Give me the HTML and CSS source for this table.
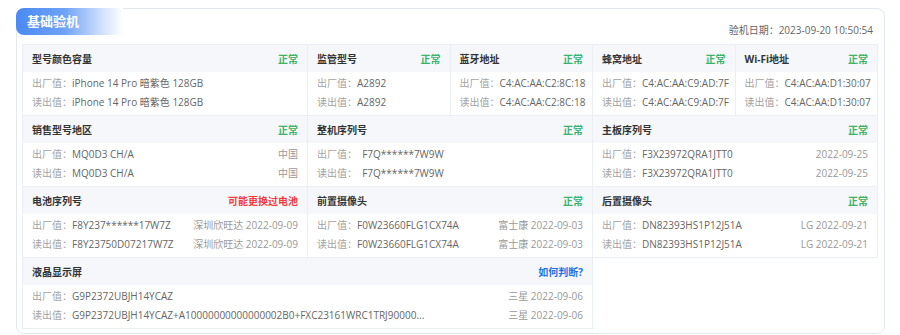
FILE: index.html
```html
<!DOCTYPE html>
<html lang="zh-CN">
<head>
<meta charset="utf-8">
<title>基础验机</title>
<link rel="stylesheet" href="styles.css">
</head>
<body>
<div class="card">
  <div class="card-head">
    <div class="badge">基础验机</div>
    <div class="date">验机日期：2023-09-20 10:50:54</div>
  </div>
  <div class="grid">
    <div class="cell span2">
      <div class="cell-head"><span class="title">型号颜色容量</span><span class="ok">正常</span></div>
      <div class="cell-body">
        <div class="line"><span><span class="lbl">出厂值：</span><span class="val">iPhone 14 Pro 暗紫色 128GB</span></span></div>
        <div class="line"><span><span class="lbl">读出值：</span><span class="val">iPhone 14 Pro 暗紫色 128GB</span></span></div>
      </div>
    </div>
    <div class="cell">
      <div class="cell-head"><span class="title">监管型号</span><span class="ok">正常</span></div>
      <div class="cell-body">
        <div class="line"><span><span class="lbl">出厂值：</span><span class="val">A2892</span></span></div>
        <div class="line"><span><span class="lbl">读出值：</span><span class="val">A2892</span></span></div>
      </div>
    </div>
    <div class="cell">
      <div class="cell-head"><span class="title">蓝牙地址</span><span class="ok">正常</span></div>
      <div class="cell-body">
        <div class="line"><span><span class="lbl">出厂值：</span><span class="val">C4:AC:AA:C2:8C:18</span></span></div>
        <div class="line"><span><span class="lbl">读出值：</span><span class="val">C4:AC:AA:C2:8C:18</span></span></div>
      </div>
    </div>
    <div class="cell">
      <div class="cell-head"><span class="title">蜂窝地址</span><span class="ok">正常</span></div>
      <div class="cell-body">
        <div class="line"><span><span class="lbl">出厂值：</span><span class="val">C4:AC:AA:C9:AD:7F</span></span></div>
        <div class="line"><span><span class="lbl">读出值：</span><span class="val">C4:AC:AA:C9:AD:7F</span></span></div>
      </div>
    </div>
    <div class="cell">
      <div class="cell-head"><span class="title">Wi-Fi地址</span><span class="ok">正常</span></div>
      <div class="cell-body">
        <div class="line"><span><span class="lbl">出厂值：</span><span class="val">C4:AC:AA:D1:30:07</span></span></div>
        <div class="line"><span><span class="lbl">读出值：</span><span class="val">C4:AC:AA:D1:30:07</span></span></div>
      </div>
    </div>

    <div class="cell span2">
      <div class="cell-head"><span class="title">销售型号地区</span><span class="ok">正常</span></div>
      <div class="cell-body">
        <div class="line"><span><span class="lbl">出厂值：</span><span class="val">MQ0D3 CH/A</span></span><span class="meta">中国</span></div>
        <div class="line"><span><span class="lbl">读出值：</span><span class="val">MQ0D3 CH/A</span></span><span class="meta">中国</span></div>
      </div>
    </div>
    <div class="cell span2">
      <div class="cell-head"><span class="title">整机序列号</span><span class="ok">正常</span></div>
      <div class="cell-body">
        <div class="line"><span><span class="lbl">出厂值：</span><span class="val">&nbsp; F7Q******7W9W</span></span></div>
        <div class="line"><span><span class="lbl">读出值：</span><span class="val">&nbsp; F7Q******7W9W</span></span></div>
      </div>
    </div>
    <div class="cell span2">
      <div class="cell-head"><span class="title">主板序列号</span><span class="ok">正常</span></div>
      <div class="cell-body">
        <div class="line"><span><span class="lbl">出厂值：</span><span class="val">F3X23972QRA1JTT0</span></span><span class="meta">2022-09-25</span></div>
        <div class="line"><span><span class="lbl">读出值：</span><span class="val">F3X23972QRA1JTT0</span></span><span class="meta">2022-09-25</span></div>
      </div>
    </div>

    <div class="cell span2">
      <div class="cell-head"><span class="title">电池序列号</span><span class="warn">可能更换过电池</span></div>
      <div class="cell-body">
        <div class="line"><span><span class="lbl">出厂值：</span><span class="val">F8Y237******17W7Z</span></span><span class="meta">深圳欣旺达 2022-09-09</span></div>
        <div class="line"><span><span class="lbl">读出值：</span><span class="val">F8Y23750D07217W7Z</span></span><span class="meta">深圳欣旺达 2022-09-09</span></div>
      </div>
    </div>
    <div class="cell span2">
      <div class="cell-head"><span class="title">前置摄像头</span><span class="ok">正常</span></div>
      <div class="cell-body">
        <div class="line"><span><span class="lbl">出厂值：</span><span class="val">F0W23660FLG1CX74A</span></span><span class="meta">富士康 2022-09-03</span></div>
        <div class="line"><span><span class="lbl">读出值：</span><span class="val">F0W23660FLG1CX74A</span></span><span class="meta">富士康 2022-09-03</span></div>
      </div>
    </div>
    <div class="cell span2">
      <div class="cell-head"><span class="title">后置摄像头</span><span class="ok">正常</span></div>
      <div class="cell-body">
        <div class="line"><span><span class="lbl">出厂值：</span><span class="val">DN82393HS1P12J51A</span></span><span class="meta">LG 2022-09-21</span></div>
        <div class="line"><span><span class="lbl">读出值：</span><span class="val">DN82393HS1P12J51A</span></span><span class="meta">LG 2022-09-21</span></div>
      </div>
    </div>

    <div class="cell span4">
      <div class="cell-head"><span class="title">液晶显示屏</span><span class="link">如何判断?</span></div>
      <div class="cell-body">
        <div class="line"><span><span class="lbl">出厂值：</span><span class="val">G9P2372UBJH14YCAZ</span></span><span class="meta">三星 2022-09-06</span></div>
        <div class="line"><span><span class="lbl">读出值：</span><span class="val">G9P2372UBJH14YCAZ+A10000000000000002B0+FXC23161WRC1TRJ90000...</span></span><span class="meta">三星 2022-09-06</span></div>
      </div>
    </div>
  </div>
</div>
</body>
</html>
```

FILE: styles.css
```css
* { box-sizing: border-box; }
html, body { margin: 0; padding: 0; background: #ffffff; }
body {
  font-family: "Open Sans", "Noto Sans CJK SC", sans-serif;
  font-size: 10px;
  color: #666;
}
.card {
  margin: 8px 0 0 16px;
  width: 869px;
  height: 326px;
  border: 1px solid #e3e8ef;
  border-radius: 8px;
  padding: 0 6px 4px 5px;
}
.card-head {
  height: 35px;
  display: flex;
  justify-content: space-between;
  align-items: flex-start;
  margin: 0 0 0 -6px;
}
.badge {
  margin-top: -1px;
  height: 27px;
  width: 107px;
  padding-left: 11px;
  line-height: 27px;
  font-size: 13px;
  font-weight: 700;
  color: #fff;
  border-radius: 8px 0 0 8px;
  background: linear-gradient(90deg, #4a8af4 0%, #6ea2f6 45%, #cfe0fc 80%, #ffffff 100%);
}
.date {
  margin-top: 14px;
  margin-right: 5px;
  line-height: 14px;
  color: #666;
}
.grid {
  display: grid;
  grid-template-columns: repeat(6, minmax(0, 1fr));
  border-top: 1px solid #ebeef5;
  border-left: 1px solid #ebeef5;
}
.cell {
  min-width: 0;
  border-right: 1px solid #ebeef5;
  border-bottom: 1px solid #ebeef5;
}
.span2 { grid-column: span 2; }
.span4 { grid-column: span 4; }
.cell-head {
  height: 27px;
  background: #f5f7fa;
  display: flex;
  justify-content: space-between;
  align-items: center;
  padding: 0 9px;
}
.title { font-weight: 700; color: #333; }
.ok { color: #3bb36b; font-weight: 600; }
.warn { color: #f5393d; font-weight: 600; }
.link { color: #1a73e8; font-weight: 700; }
.cell-body {
  height: 43px;
  padding: 2px 9px 0;
}
.line {
  display: flex;
  justify-content: space-between;
  line-height: 19px;
  white-space: nowrap;
}
.lbl { color: #a3a3a3; }
.val { color: #666; }
.meta { color: #999; }
```
